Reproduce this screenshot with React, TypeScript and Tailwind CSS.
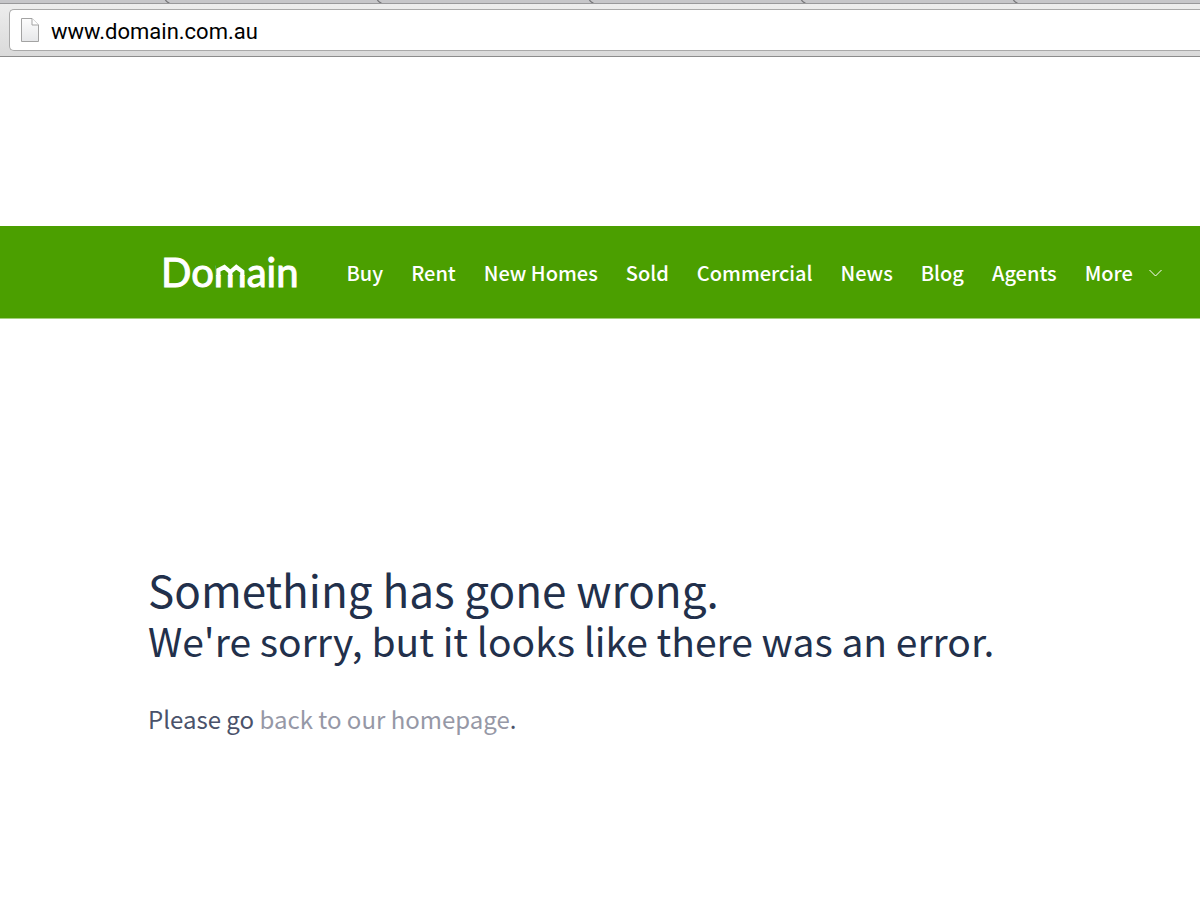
import { useState } from 'react'

const navItems = ['Buy', 'Rent', 'New Homes', 'Sold', 'Commercial', 'News', 'Blog', 'Agents']

function TabEdge() {
  return (
    <svg width="6" height="3" viewBox="0 0 6 3" fill="none" className="shrink-0">
      <path d="M1 -1C2 1.5 3 2.5 5.5 3" stroke="#77777a" strokeWidth="1.2" />
    </svg>
  )
}

function BrowserBar() {
  const [url, setUrl] = useState('www.domain.com.au')

  return (
    <div className="border-b border-[#8c8c8c]">
      {/* Bottom edge of the tab strip */}
      <div className="flex h-1 overflow-hidden border-b border-[#98989a] bg-[#c6c6c9]">
        <div className="flex w-[170px] shrink-0 justify-end"><TabEdge /></div>
        {[1, 2, 3, 4].map(n => (
          <div key={n} className="flex w-[212px] shrink-0 justify-end"><TabEdge /></div>
        ))}
      </div>

      <div className="bg-linear-to-b from-[#ededed] to-[#dadada] pt-[5px] pb-[5px] pl-[9px]">
        <label className="flex h-[42px] items-center gap-3 rounded-l-[5px] border border-r-0 border-[#a9a9a9] bg-white pl-[11px]">
          <svg width="18" height="24" viewBox="0 0 18 24" className="shrink-0">
            <defs>
              <linearGradient id="page" x1="0" y1="0" x2="0" y2="1">
                <stop offset="0" stopColor="#fdfdfd" />
                <stop offset="1" stopColor="#e6e7e9" />
              </linearGradient>
            </defs>
            <path d="M.5.5H11L17.500 7V23.500H.5Z" fill="url(#page)" stroke="#a3a3a3" />
            <path d="M11 .5V7H17.500" fill="#fff" stroke="#a3a3a3" />
          </svg>
          <input
            type="text"
            aria-label="Address"
            value={url}
            onChange={e => setUrl(e.target.value)}
            className="min-w-0 flex-1 bg-transparent pt-1 font-[Roboto,sans-serif] text-[22px] leading-7 text-black outline-none"
          />
        </label>
      </div>
    </div>
  )
}

function Logo() {
  return (
    <a href="#" className="relative block font-[Lato,sans-serif] text-[40px] leading-[48px] text-white [-webkit-text-stroke:1px_white]">
      Domain
      {/* Twin roof that replaces the arches of the m */}
      <svg width="31" height="15" viewBox="0 0 31 15" fill="none" className="absolute top-[14px] left-[54px]">
        <path d="M.8 2H30.500V13H.8Z" fill="#4b9f00" />
        <path d="M3.400 14V8L9.400 5L15.300 10L21.300 5L27.300 9.500V14M15.300 9V14" stroke="#fff" strokeWidth="4.200" />
      </svg>
    </a>
  )
}

function Header() {
  return (
    <header className="flex h-[93px] items-center border-b border-[#a3d07c] bg-[#4b9f00] pl-[161px]">
      <Logo />
      <nav className="ml-12 flex items-center gap-7 pt-0.5 text-[20px] leading-8 font-medium whitespace-nowrap text-white">
        {navItems.map(item => (
          <a key={item} href="#">{item}</a>
        ))}
        <button type="button" className="flex items-center gap-4">
          More
          <svg width="13" height="8" viewBox="0 0 13 8" fill="none">
            <path d="M.5 1L6.500 7L12.500 1" stroke="#fff" />
          </svg>
        </button>
      </nav>
    </header>
  )
}

export default function App() {
  return (
    <div className="min-h-screen bg-white font-['Noto_Sans_CJK_SC','Noto_Sans',sans-serif]">
      <BrowserBar />
      <div className="pt-[169px]">
        <Header />
      </div>
      <main className="px-[148px] pt-[244px] text-[#22304b]">
        <h1 className="text-[44px] leading-[52px]">Something has gone wrong.</h1>
        <h2 className="text-[39px] leading-[50px]">We're sorry, but it looks like there was an error.</h2>
        <p className="mt-9 text-[24px] leading-9 text-[#4a526a]">
          Please go <a href="#" className="text-[#9698a6]">back to our homepage</a>.
        </p>
      </main>
    </div>
  )
}
